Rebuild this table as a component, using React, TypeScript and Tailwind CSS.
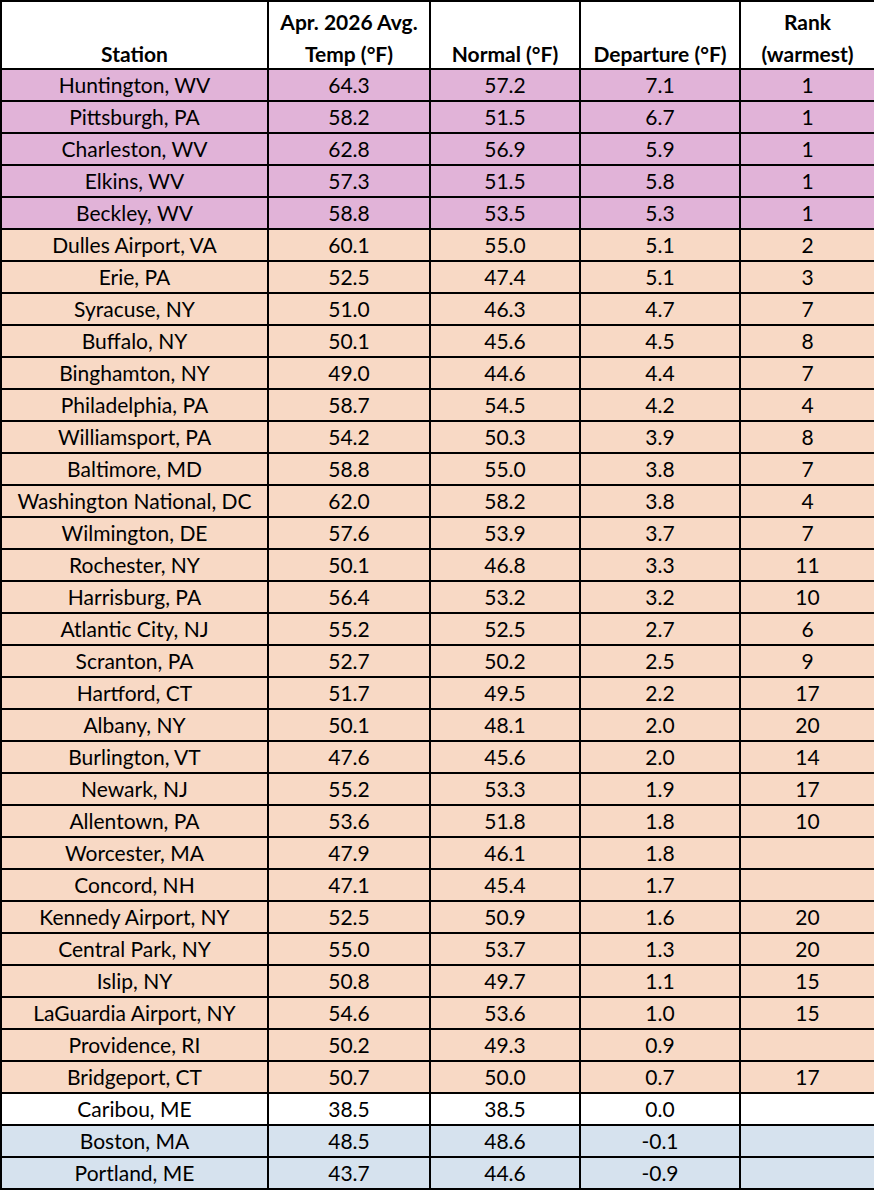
import React from "react";

type Row = [string, string, string, string, string, "p" | "o" | "w" | "b"];

const rows: Row[] = [
  ["Huntington, WV", "64.3", "57.2", "7.1", "1", "p"],
  ["Pittsburgh, PA", "58.2", "51.5", "6.7", "1", "p"],
  ["Charleston, WV", "62.8", "56.9", "5.9", "1", "p"],
  ["Elkins, WV", "57.3", "51.5", "5.8", "1", "p"],
  ["Beckley, WV", "58.8", "53.5", "5.3", "1", "p"],
  ["Dulles Airport, VA", "60.1", "55.0", "5.1", "2", "o"],
  ["Erie, PA", "52.5", "47.4", "5.1", "3", "o"],
  ["Syracuse, NY", "51.0", "46.3", "4.7", "7", "o"],
  ["Buffalo, NY", "50.1", "45.6", "4.5", "8", "o"],
  ["Binghamton, NY", "49.0", "44.6", "4.4", "7", "o"],
  ["Philadelphia, PA", "58.7", "54.5", "4.2", "4", "o"],
  ["Williamsport, PA", "54.2", "50.3", "3.9", "8", "o"],
  ["Baltimore, MD", "58.8", "55.0", "3.8", "7", "o"],
  ["Washington National, DC", "62.0", "58.2", "3.8", "4", "o"],
  ["Wilmington, DE", "57.6", "53.9", "3.7", "7", "o"],
  ["Rochester, NY", "50.1", "46.8", "3.3", "11", "o"],
  ["Harrisburg, PA", "56.4", "53.2", "3.2", "10", "o"],
  ["Atlantic City, NJ", "55.2", "52.5", "2.7", "6", "o"],
  ["Scranton, PA", "52.7", "50.2", "2.5", "9", "o"],
  ["Hartford, CT", "51.7", "49.5", "2.2", "17", "o"],
  ["Albany, NY", "50.1", "48.1", "2.0", "20", "o"],
  ["Burlington, VT", "47.6", "45.6", "2.0", "14", "o"],
  ["Newark, NJ", "55.2", "53.3", "1.9", "17", "o"],
  ["Allentown, PA", "53.6", "51.8", "1.8", "10", "o"],
  ["Worcester, MA", "47.9", "46.1", "1.8", "", "o"],
  ["Concord, NH", "47.1", "45.4", "1.7", "", "o"],
  ["Kennedy Airport, NY", "52.5", "50.9", "1.6", "20", "o"],
  ["Central Park, NY", "55.0", "53.7", "1.3", "20", "o"],
  ["Islip, NY", "50.8", "49.7", "1.1", "15", "o"],
  ["LaGuardia Airport, NY", "54.6", "53.6", "1.0", "15", "o"],
  ["Providence, RI", "50.2", "49.3", "0.9", "", "o"],
  ["Bridgeport, CT", "50.7", "50.0", "0.7", "17", "o"],
  ["Caribou, ME", "38.5", "38.5", "0.0", "", "w"],
  ["Boston, MA", "48.5", "48.6", "-0.1", "", "b"],
  ["Portland, ME", "43.7", "44.6", "-0.9", "", "b"],
];

const bg: Record<string, string> = {
  p: "bg-[#e1b3d8]",
  o: "bg-[#f8d9c5]",
  w: "bg-white",
  b: "bg-[#d6e2ee]",
};

export default function App() {
  return (
    <div className="w-[874px] h-[1190px] bg-white overflow-hidden" style={{ fontFamily: "Lato, 'Open Sans', sans-serif" }}>
      <table className="border-collapse table-fixed w-[874px] text-black text-[21px]">
        <colgroup>
          <col className="w-[267px]" />
          <col className="w-[162px]" />
          <col className="w-[150px]" />
          <col className="w-[160px]" />
          <col className="w-[135px]" />
        </colgroup>
        <thead>
          <tr className="h-[68px]">
            {[
              ["Station"],
              ["Apr. 2026 Avg.", "Temp (°F)"],
              ["Normal (°F)"],
              ["Departure (°F)"],
              ["Rank", "(warmest)"],
            ].map((lines, i) => (
              <th key={i} className="border-2 border-black align-bottom font-bold text-center leading-[32px] pb-0 px-0">
                <div className="relative top-[2px]">
                  {lines.map((l, j) => (
                    <div key={j}>{l}</div>
                  ))}
                </div>
              </th>
            ))}
          </tr>
        </thead>
        <tbody>
          {rows.map((r, i) => (
            <tr key={i} className={`h-[32px] ${bg[r[5]]}`}>
              {r.slice(0, 5).map((c, j) => (
                <td key={j} className="border-2 border-black text-center leading-[28px] p-0 whitespace-nowrap">
                  {c}
                </td>
              ))}
            </tr>
          ))}
        </tbody>
      </table>
    </div>
  );
}
